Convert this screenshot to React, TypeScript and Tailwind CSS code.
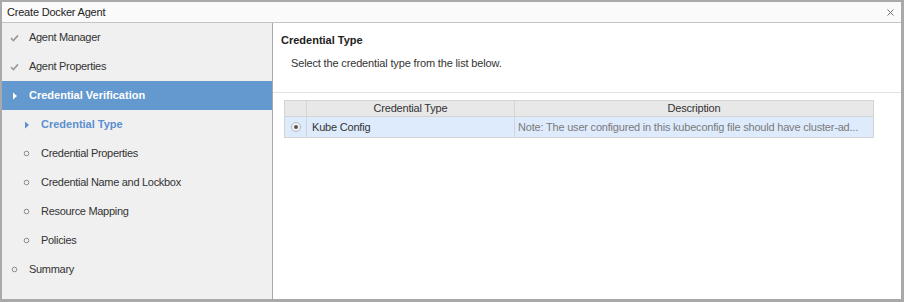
import { X } from "lucide-react";

type Step = {
  label: string;
  state: "done" | "active" | "current" | "todo";
  sub?: boolean;
};

const steps: Step[] = [
  { label: "Agent Manager", state: "done" },
  { label: "Agent Properties", state: "done" },
  { label: "Credential Verification", state: "active" },
  { label: "Credential Type", state: "current", sub: true },
  { label: "Credential Properties", state: "todo", sub: true },
  { label: "Credential Name and Lockbox", state: "todo", sub: true },
  { label: "Resource Mapping", state: "todo", sub: true },
  { label: "Policies", state: "todo", sub: true },
  { label: "Summary", state: "todo" },
];

function StepIcon({ state }: { state: Step["state"] }) {
  if (state === "done") {
    return (
      <svg width="9" height="8" viewBox="0 0 9 8">
        <path d="M1 4.2 L3.4 6.5 L8 1.4" fill="none" stroke="#9a9a9a" strokeWidth="1.6" />
      </svg>
    );
  }
  if (state === "active" || state === "current") {
    return (
      <svg width="6" height="8" viewBox="0 0 6 8">
        <path d="M1 0.5 L5 4 L1 7.5 Z" fill={state === "active" ? "#ffffff" : "#5b8fd0"} />
      </svg>
    );
  }
  return (
    <svg width="7" height="7" viewBox="0 0 7 7">
      <circle cx="3.5" cy="3.5" r="2.3" fill="none" stroke="#8a8a8a" strokeWidth="1" />
    </svg>
  );
}

export default function App() {
  return (
    <div
      className="flex h-[302px] w-[904px] flex-col border-t-2 border-r-[3px] border-b-[3px] border-l-2 border-[#a9a9a9] bg-white text-[11px] text-[#333]"
      style={{ fontFamily: '"Liberation Sans", Arial, sans-serif' }}
    >
      {/* title bar */}
      <div className="flex h-[21px] shrink-0 items-center justify-between border-b border-[#c4c4c4] bg-[#fafafa] pr-[5px] pl-[5px]">
        <span className="tracking-[-0.2px] text-[#222]">Create Docker Agent</span>
        <X size={11} strokeWidth={2} className="text-[#666]" />
      </div>

      <div className="flex min-h-0 flex-1">
        {/* steps */}
        <div className="w-[271px] shrink-0 border-r border-[#a8a8a8] bg-[#f0f0f0]">
          {steps.map((s) => (
            <div
              key={s.label}
              className={`flex h-[29px] items-center ${s.state === "active" ? "bg-[#6499cf] text-white" : ""}`}
            >
              <div className={`flex w-[13px] justify-center ${s.sub ? "ml-[18px]" : "ml-[6px]"}`}>
                <StepIcon state={s.state} />
              </div>
              <span
                className={`ml-[8px] ${
                  s.state === "active"
                    ? "font-bold"
                    : s.state === "current"
                      ? "font-bold text-[#5b8fd0]"
                      : "tracking-[-0.3px]"
                }`}
              >
                {s.label}
              </span>
            </div>
          ))}
        </div>

        {/* content */}
        <div className="flex-1">
          <div className="border-b border-[#e2e2e2] pt-[9px] pb-[21px] pl-[8px]">
            <div className="font-bold text-[#222]">Credential Type</div>
            <div className="mt-[6px] ml-[10px] tracking-[-0.15px]">
              Select the credential type from the list below.
            </div>
          </div>

          <div className="pt-[7px] pl-[11px]">
            <div className="w-[590px] border border-[#d4d4d4]">
              <div className="flex h-[16px] border-b border-[#d4d4d4] bg-[#e8e8e8] tracking-[-0.2px]">
                <div className="w-[22px] border-r border-[#d4d4d4]" />
                <div className="flex w-[208px] items-center justify-center border-r border-[#d4d4d4]">
                  Credential Type
                </div>
                <div className="flex flex-1 items-center justify-center">Description</div>
              </div>
              <div className="flex h-[20px] bg-[#deebfc] tracking-[-0.2px]">
                <div className="flex w-[22px] items-center justify-center border-r border-[#d4d4d4]">
                  <span className="flex h-[10px] w-[10px] items-center justify-center rounded-full border border-[#b5b5b5] bg-[#f4f4f4]">
                    <span className="h-[4px] w-[4px] rounded-full bg-[#555]" />
                  </span>
                </div>
                <div className="flex w-[208px] items-center border-r border-[#d4d4d4] pl-[5px]">
                  Kube Config
                </div>
                <div className="flex min-w-0 flex-1 items-center pl-[3px] text-[#7a7a7a]">
                  <span className="truncate">
                    Note: The user configured in this kubeconfig file should have cluster-ad...
                  </span>
                </div>
              </div>
            </div>
          </div>
        </div>
      </div>
    </div>
  );
}
